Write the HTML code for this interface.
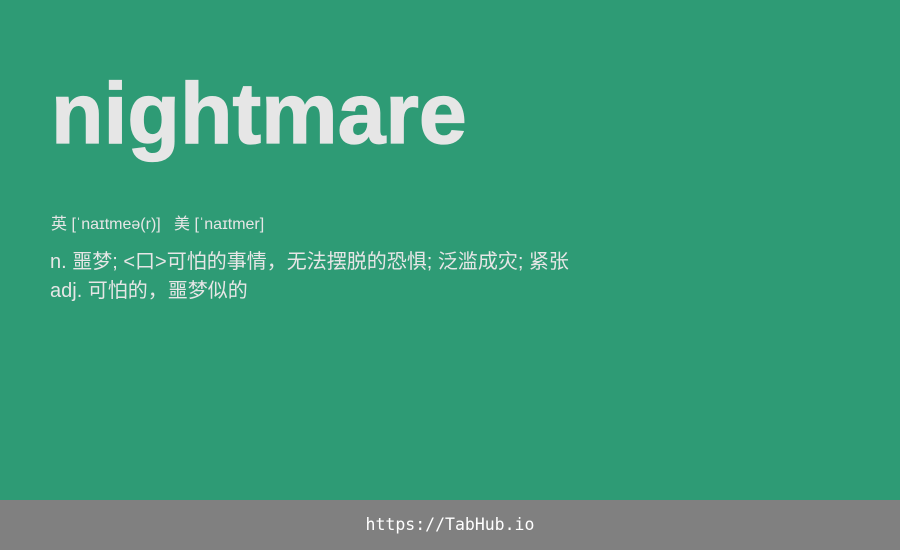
<!DOCTYPE html>
<html><head><meta charset="utf-8"><style>
html,body{margin:0;padding:0}
body{width:900px;height:550px;background:#2e9b75;position:relative;overflow:hidden;font-family:"Liberation Sans","Noto Sans CJK SC",sans-serif;color:#e6e6e6}
.w{position:absolute;left:51px;top:64px;font-size:86px;font-weight:bold;line-height:100px;white-space:nowrap;-webkit-text-stroke:1.3px #e6e6e6}
.p{position:absolute;left:51px;top:214px;font-size:16px;line-height:22px;white-space:nowrap}
.d{position:absolute;left:50px;top:248px;font-size:20px;line-height:29px;white-space:nowrap}
.f{position:absolute;left:0;top:500px;width:900px;height:50px;background:#808080;color:#fff;font-family:"DejaVu Sans Mono",monospace;font-size:16.5px;line-height:50px;text-align:center}
</style></head><body>
<div class="w">nightmare</div>
<div class="p">英 [ˈnaɪtmeə(r)]&nbsp;&nbsp;&nbsp;美 [ˈnaɪtmer]</div>
<div class="d">n. 噩梦; &lt;口&gt;可怕的事情，无法摆脱的恐惧; 泛滥成灾; 紧张<br>adj. 可怕的，噩梦似的</div>
<div class="f">https://TabHub.io</div>
</body></html>
